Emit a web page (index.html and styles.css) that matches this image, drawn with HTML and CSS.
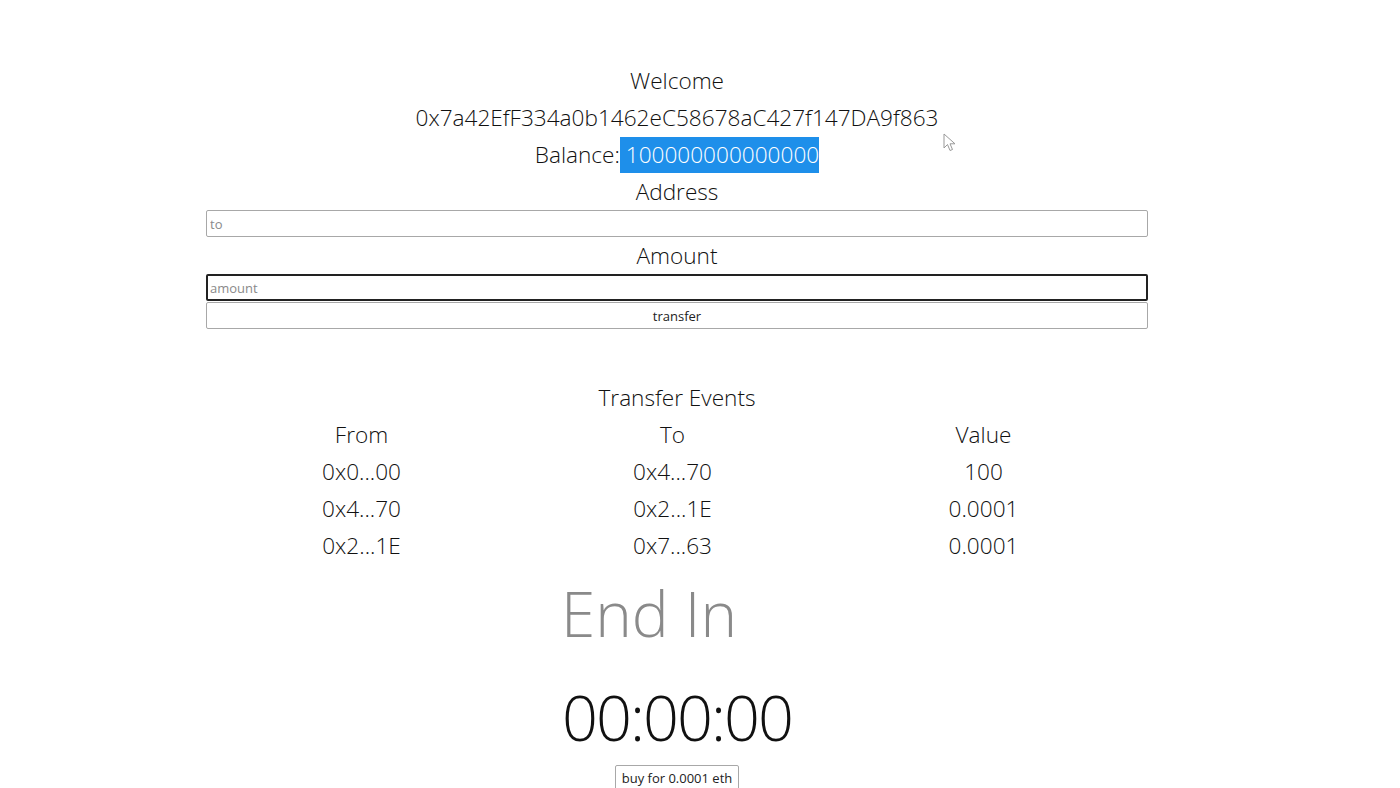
FILE: index.html
```html
<!DOCTYPE html>
<html>
<head>
<meta charset="utf-8">
<link rel="stylesheet" href="styles.css">
</head>
<body>
<div class="app">
  <div class="line">Welcome</div>
  <div class="line">0x7a42EfF334a0b1462eC58678aC427f147DA9f863</div>
  <div class="line">Balance:<span class="sel"> 100000000000000</span></div>
  <div class="line">Address</div>
  <input class="field" type="text" placeholder="to">
  <div class="line">Amount</div>
  <input class="field focus" type="text" placeholder="amount">
  <button class="wide-btn">transfer</button>

  <div class="events">
    <div class="line">Transfer Events</div>
    <div class="grid">
      <div>From</div><div>To</div><div>Value</div>
      <div>0x0...00</div><div>0x4...70</div><div>100</div>
      <div>0x4...70</div><div>0x2...1E</div><div>0.0001</div>
      <div>0x2...1E</div><div>0x7...63</div><div>0.0001</div>
    </div>
  </div>

  <div class="end">End In</div>
  <div class="timer">00:00:00</div>
  <div class="buy-row"><button class="buy">buy for 0.0001 eth</button></div>
</div>
<svg class="cursor" width="14" height="20" viewBox="0 0 14 20">
  <path d="M1 1 L1 15 L4.5 11.5 L7 17.5 L9.5 16.5 L7 10.8 L12 10.8 Z" fill="#fff" stroke="#999" stroke-width="1"/>
</svg>
</body>
</html>
```
FILE: styles.css
```css
html, body {
  margin: 0;
  padding: 0;
  background: #fff;
}
body {
  font-family: "Open Sans", "Noto Sans", sans-serif;
  font-weight: 300;
  color: #111;
  position: relative;
  height: 788px;
  overflow: hidden;
}
.app {
  width: 942px;
  margin-left: 206px;
  padding-top: 62px;
  display: flex;
  flex-direction: column;
  text-align: center;
}
.line {
  font-size: 22.6px;
  line-height: 37px;
  height: 37px;
}
.sel {
  background: #1e8fea;
  color: #fff;
  display: inline-block;
  white-space: pre;
  line-height: 36px;
  margin-top: 1px;
}
.field {
  box-sizing: border-box;
  width: 942px;
  height: 27px;
  margin: 0;
  border: 1px solid #a8a8a8;
  border-radius: 2px;
  font-family: "Open Sans", sans-serif;
  font-size: 13px;
  padding: 0 3px;
  outline: none;
}
.field::placeholder {
  color: #8a8a8a;
}
.field.focus {
  border: 2px solid #222;
  padding: 0 2px;
}
.wide-btn {
  box-sizing: border-box;
  width: 942px;
  height: 27px;
  margin: 1px 0 0;
  background: #fff;
  border: 1px solid #a8a8a8;
  border-radius: 2px;
  font-family: "Open Sans", sans-serif;
  font-size: 13px;
  color: #222;
}
.events {
  margin-top: 50px;
}
.grid {
  display: grid;
  grid-template-columns: repeat(3, 311px);
  font-size: 22.6px;
  line-height: 37px;
}
.end {
  font-size: 62px;
  line-height: 100px;
  color: #8a8a8a;
  padding-right: 56px;
  margin-top: -1px;
}
.timer {
  font-size: 63px;
  letter-spacing: -2px;
  line-height: 106px;
  color: #111;
  margin-top: 1px;
}
.buy-row {
  display: flex;
  justify-content: center;
}
.buy {
  margin-top: -5px;
  height: 26px;
  padding: 0 6px;
  background: #fff;
  border: 1px solid #a8a8a8;
  border-radius: 2px;
  font-family: "Open Sans", sans-serif;
  font-size: 13px;
  color: #222;
}
.cursor {
  position: absolute;
  left: 943px;
  top: 133px;
}
```
